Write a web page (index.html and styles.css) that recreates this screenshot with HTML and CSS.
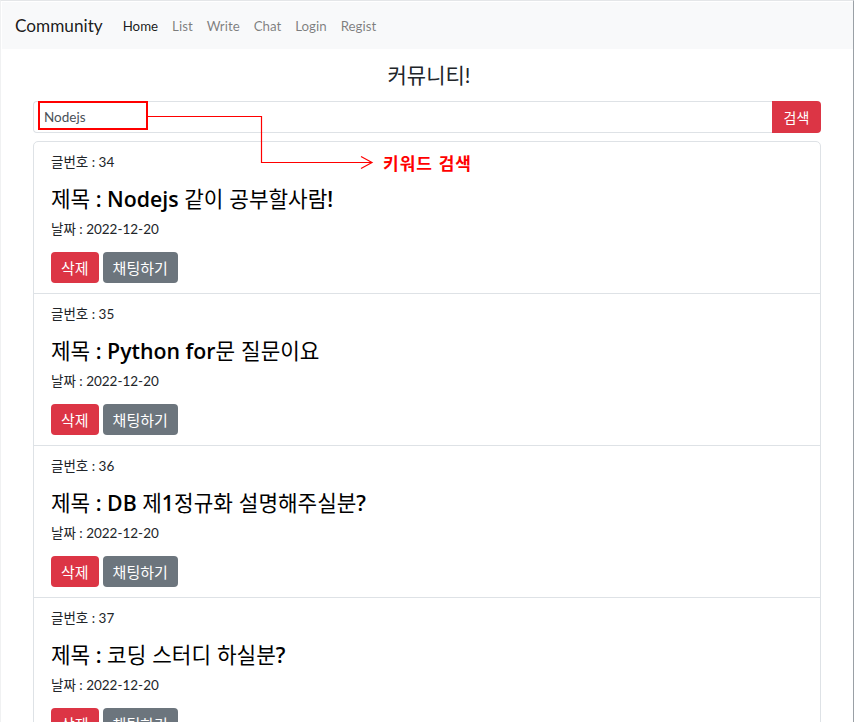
FILE: index.html
```html
<!DOCTYPE html>
<html lang="ko">
<head>
<meta charset="utf-8">
<title>Community</title>
<link rel="stylesheet" href="styles.css">
</head>
<body>
<div class="window">
  <nav class="navbar">
    <a class="brand" href="#">Community</a>
    <ul class="nav">
      <li><a class="nav-link active" href="#">Home</a></li>
      <li><a class="nav-link" href="#">List</a></li>
      <li><a class="nav-link" href="#">Write</a></li>
      <li><a class="nav-link" href="#">Chat</a></li>
      <li><a class="nav-link" href="#">Login</a></li>
      <li><a class="nav-link" href="#">Regist</a></li>
    </ul>
  </nav>
  <main class="main">
    <h2 class="page-title">커뮤니티!</h2>
    <form class="search">
      <input class="search-input" type="text" value="Nodejs">
      <button class="btn btn-danger search-btn" type="button">검색</button>
    </form>
    <ul class="posts">
      <li class="post">
        <p class="post-no">글번호 : 34</p>
        <h4 class="post-title"><span class="ko">제목</span> : Nodejs <span class="ko">같이 공부할사람</span>!</h4>
        <p class="post-date">날짜 : 2022-12-20</p>
        <div class="post-actions">
          <button class="btn btn-danger" type="button">삭제</button>
          <button class="btn btn-secondary" type="button">채팅하기</button>
        </div>
      </li>
      <li class="post">
        <p class="post-no">글번호 : 35</p>
        <h4 class="post-title"><span class="ko">제목</span> : Python for<span class="ko">문 질문이요</span></h4>
        <p class="post-date">날짜 : 2022-12-20</p>
        <div class="post-actions">
          <button class="btn btn-danger" type="button">삭제</button>
          <button class="btn btn-secondary" type="button">채팅하기</button>
        </div>
      </li>
      <li class="post">
        <p class="post-no">글번호 : 36</p>
        <h4 class="post-title"><span class="ko">제목</span> : DB <span class="ko">제</span>1<span class="ko">정규화 설명해주실분</span>?</h4>
        <p class="post-date">날짜 : 2022-12-20</p>
        <div class="post-actions">
          <button class="btn btn-danger" type="button">삭제</button>
          <button class="btn btn-secondary" type="button">채팅하기</button>
        </div>
      </li>
      <li class="post">
        <p class="post-no">글번호 : 37</p>
        <h4 class="post-title"><span class="ko">제목</span> : <span class="ko">코딩 스터디 하실분</span>?</h4>
        <p class="post-date">날짜 : 2022-12-20</p>
        <div class="post-actions">
          <button class="btn btn-danger" type="button">삭제</button>
          <button class="btn btn-secondary" type="button">채팅하기</button>
        </div>
      </li>
    </ul>
  </main>
  <svg class="annot" width="400" height="80" viewBox="0 0 400 80" aria-hidden="true">
    <rect x="38" y="2" width="108" height="27" fill="none" stroke="#ff0000" stroke-width="2"/>
    <polyline points="147,16.5 260.5,16.5 260.5,62.5 371,62.5" fill="none" stroke="#ff0000" stroke-width="1.2"/>
    <polyline points="360,56.5 371,62.5 360,68.5" fill="none" stroke="#ff0000" stroke-width="1.2"/>
  </svg>
  <span class="annot-label">키워드 검색</span>
</div>
</body>
</html>
```

FILE: styles.css
```css
* { box-sizing: border-box; }

html, body {
  margin: 0;
  padding: 0;
  background: #ffffff;
}

body {
  font-family: Lato, "Noto Sans CJK KR", sans-serif;
  color: #212529;
}

.window {
  position: relative;
  width: 854px;
  min-height: 722px;
  border-top: 1px solid #e4e6e8;
  border-right: 1px solid #9aa0a6;
  border-left: 1px solid #f0f1f2;
}

.navbar {
  display: flex;
  align-items: center;
  height: 47px;
  margin: 1px 0 0 1px;
  padding: 0 13px;
  background: #f8f9fa;
}

.brand {
  font-size: 17.2px;
  color: rgba(0, 0, 0, 0.9);
  text-decoration: none;
  margin-right: 13px;
  line-height: 1;
}

.nav {
  display: flex;
  list-style: none;
  margin: 0;
  padding: 0;
}

.nav-link {
  display: block;
  padding: 0 7px;
  font-size: 13.3px;
  color: rgba(0, 0, 0, 0.5);
  text-decoration: none;
}

.nav-link.active {
  color: rgba(0, 0, 0, 0.9);
}

.main {
  padding: 0 32px 0 32px;
}

.page-title {
  margin: 11px 0 11px;
  text-align: center;
  font-size: 21px;
  font-weight: 400;
  line-height: 30px;
  color: #212529;
  padding-left: 4px;
}

.search {
  display: flex;
  height: 32px;
  margin: 0;
}

.search-input {
  flex: 1;
  min-width: 0;
  height: 32px;
  padding: 0 10px;
  border: 1px solid #dee2e6;
  border-right: 0;
  border-radius: 4px 0 0 4px;
  font-family: Lato, "Noto Sans CJK KR", sans-serif;
  font-size: 13.5px;
  color: #495057;
  background: #fff;
  outline: none;
}

.btn {
  height: 31px;
  padding: 0 10px;
  border: 0;
  border-radius: 4px;
  font-family: Lato, "Noto Sans CJK KR", sans-serif;
  font-size: 15px;
  color: #fff;
  cursor: pointer;
}

.btn-danger { background: #dc3545; }
.btn-secondary { background: #6c757d; }

.search-btn {
  height: 32px;
  width: 49px;
  padding: 0;
  font-size: 14px;
  border-radius: 0 4px 4px 0;
}

.posts {
  list-style: none;
  margin: 8px 0 0;
  padding: 0;
  border: 1px solid #dee2e6;
  border-radius: 5px;
}

.post {
  padding: 10px 17px 10px;
  border-top: 1px solid #dee2e6;
}

.post:first-child { border-top: 0; }

.post-no,
.post-date {
  margin: 0;
  font-size: 13.5px;
  line-height: 20px;
  color: #212529;
}

.post-no { margin-bottom: 12px; }

.post-title {
  margin: 0 0 6px;
  font-family: "Open Sans", "Noto Sans CJK KR", sans-serif;
  font-size: 21.3px;
  line-height: 28px;
  font-weight: 600;
  color: #000;
}

.post-title .ko {
  font-family: "Noto Sans CJK KR", sans-serif;
  font-weight: 400;
}

.post-date { margin-bottom: 13px; }

.post-actions {
  display: flex;
  gap: 4px;
}

.annot {
  position: absolute;
  left: 0;
  top: 99px;
  overflow: visible;
}

.annot-label {
  position: absolute;
  left: 382px;
  top: 149px;
  font-family: "Noto Sans CJK KR", sans-serif;
  font-size: 17px;
  line-height: 26px;
  font-weight: 700;
  color: #ff0000;
  letter-spacing: 1px;
}
```
